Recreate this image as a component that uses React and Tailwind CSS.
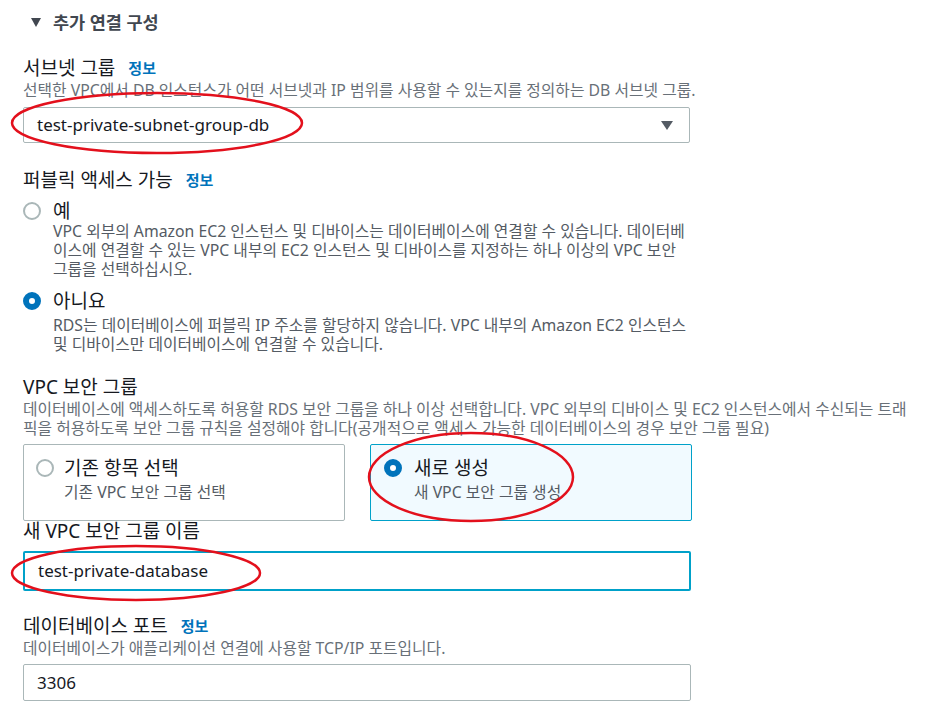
import React from "react";

const font = { fontFamily: '"Noto Sans", "Noto Sans CJK KR", sans-serif' };

function Radio({ checked }) {
  return checked ? (
    <span className="inline-block w-[18px] h-[18px] rounded-full border-[6px] border-[#0073bb] bg-white shrink-0" />
  ) : (
    <span className="inline-block w-[18px] h-[18px] rounded-full border-2 border-[#aab7b8] bg-white shrink-0" />
  );
}

function Info() {
  return <span className="text-[15px] font-bold text-[#0073bb] ml-[13px]">정보</span>;
}

function Lines({ lines, className }) {
  return (
    <div className={className}>
      {lines.map((l, i) => (
        <div key={i} className="whitespace-nowrap">{l}</div>
      ))}
    </div>
  );
}

export default function App() {
  return (
    <div
      className="relative w-[935px] h-[717px] overflow-hidden bg-white text-[#16191f]"
      style={font}
    >
      <div className="pl-[23px] pt-[9px]">
        {/* heading */}
        <div className="flex items-center h-[26px] pl-[8px]">
          <span className="w-0 h-0 border-l-[5px] border-r-[5px] border-t-[9px] border-l-transparent border-r-transparent border-t-[#414750] mr-[12px]" />
          <span className="text-[17.5px] font-bold text-[#414750]">추가 연결 구성</span>
        </div>

        {/* subnet group */}
        <div className="mt-[21px] flex items-center h-[24px]">
          <span className="text-[19px]">서브넷 그룹</span>
          <Info />
        </div>
        <div className="text-[15.8px] text-[#687078] leading-[20px] whitespace-nowrap">
          선택한 VPC에서 DB 인스턴스가 어떤 서브넷과 IP 범위를 사용할 수 있는지를 정의하는 DB 서브넷 그룹.
        </div>
        <div className="mt-[7px] w-[667px] h-[36px] border border-[#aab7b8] rounded-[2px] flex items-center justify-between pl-[13px] pr-[16px]">
          <span className="text-[17px]">test-private-subnet-group-db</span>
          <span className="w-0 h-0 border-l-[6px] border-r-[6px] border-t-[9px] border-l-transparent border-r-transparent border-t-[#545b64]" />
        </div>

        {/* public access */}
        <div className="mt-[25px] flex items-center h-[24px]">
          <span className="text-[19px]">퍼블릭 액세스 가능</span>
          <Info />
        </div>
        <div className="mt-[7px] flex items-center h-[24px]">
          <Radio />
          <span className="ml-[12px] text-[19px]">예</span>
        </div>
        <Lines
          className="pl-[30px] text-[15.8px] text-[#545b64] leading-[19px] mt-[-1px]"
          lines={[
            "VPC 외부의 Amazon EC2 인스턴스 및 디바이스는 데이터베이스에 연결할 수 있습니다. 데이터베",
            "이스에 연결할 수 있는 VPC 내부의 EC2 인스턴스 및 디바이스를 지정하는 하나 이상의 VPC 보안",
            "그룹을 선택하십시오.",
          ]}
        />
        <div className="mt-[10px] flex items-center h-[24px]">
          <Radio checked />
          <span className="ml-[12px] text-[19px]">아니요</span>
        </div>
        <Lines
          className="pl-[30px] text-[15.8px] text-[#545b64] leading-[19px] mt-[3px]"
          lines={[
            "RDS는 데이터베이스에 퍼블릭 IP 주소를 할당하지 않습니다. VPC 내부의 Amazon EC2 인스턴스",
            "및 디바이스만 데이터베이스에 연결할 수 있습니다.",
          ]}
        />

        {/* VPC security group */}
        <div className="mt-[21px] flex items-center h-[24px]">
          <span className="text-[19px]">VPC 보안 그룹</span>
        </div>
        <Lines
          className="text-[15.8px] text-[#687078] leading-[19px] mt-[1px]"
          lines={[
            "데이터베이스에 액세스하도록 허용할 RDS 보안 그룹을 하나 이상 선택합니다. VPC 외부의 디바이스 및 EC2 인스턴스에서 수신되는 트래",
            "픽을 허용하도록 보안 그룹 규칙을 설정해야 합니다(공개적으로 액세스 가능한 데이터베이스의 경우 보안 그룹 필요)",
          ]}
        />
        <div className="mt-[6px] flex gap-[25px]">
          <div className="w-[322px] h-[77px] border border-[#aab7b8] rounded-[2px] pl-[12px] pt-[11px]">
            <div className="flex items-center h-[24px]">
              <Radio />
              <span className="ml-[10px] text-[19px]">기존 항목 선택</span>
            </div>
            <div className="pl-[28px] text-[15.8px] text-[#545b64] leading-[20px] mt-[2px] whitespace-nowrap">기존 VPC 보안 그룹 선택</div>
          </div>
          <div className="w-[322px] h-[77px] border border-[#00a1c9] bg-[#f1faff] rounded-[2px] pl-[13px] pt-[11px]">
            <div className="flex items-center h-[24px]">
              <Radio checked />
              <span className="ml-[12px] text-[19px]">새로 생성</span>
            </div>
            <div className="pl-[30px] text-[15.8px] text-[#545b64] leading-[20px] mt-[2px] whitespace-nowrap">새 VPC 보안 그룹 생성</div>
          </div>
        </div>

        {/* new VPC sg name */}
        <div className="mt-[-2px] flex items-center h-[24px]">
          <span className="text-[19px]">새 VPC 보안 그룹 이름</span>
        </div>
        <div className="mt-[8px] w-[668px] h-[40px] border-2 border-[#00a1c9] rounded-[2px] flex items-center pl-[13px]">
          <span className="text-[17px]">test-private-database</span>
        </div>

        {/* port */}
        <div className="mt-[23px] flex items-center h-[24px]">
          <span className="text-[19px]">데이터베이스 포트</span>
          <Info />
        </div>
        <div className="text-[15.8px] text-[#687078] leading-[20px] whitespace-nowrap">
          데이터베이스가 애플리케이션 연결에 사용할 TCP/IP 포트입니다.
        </div>
        <div className="mt-[6px] w-[668px] h-[37px] border border-[#aab7b8] rounded-[2px] flex items-center pl-[13px]">
          <span className="text-[17px]">3306</span>
        </div>
      </div>

      {/* red annotation ellipses */}
      <svg className="absolute inset-0 pointer-events-none" width="935" height="717">
        <ellipse cx="157" cy="123" rx="145" ry="30" fill="none" stroke="#e3101c" strokeWidth="2.5" />
        <ellipse cx="471" cy="477" rx="102" ry="44" fill="none" stroke="#e3101c" strokeWidth="2.5" />
        <ellipse cx="136" cy="573" rx="124" ry="27" fill="none" stroke="#e3101c" strokeWidth="2.5" />
      </svg>
    </div>
  );
}
